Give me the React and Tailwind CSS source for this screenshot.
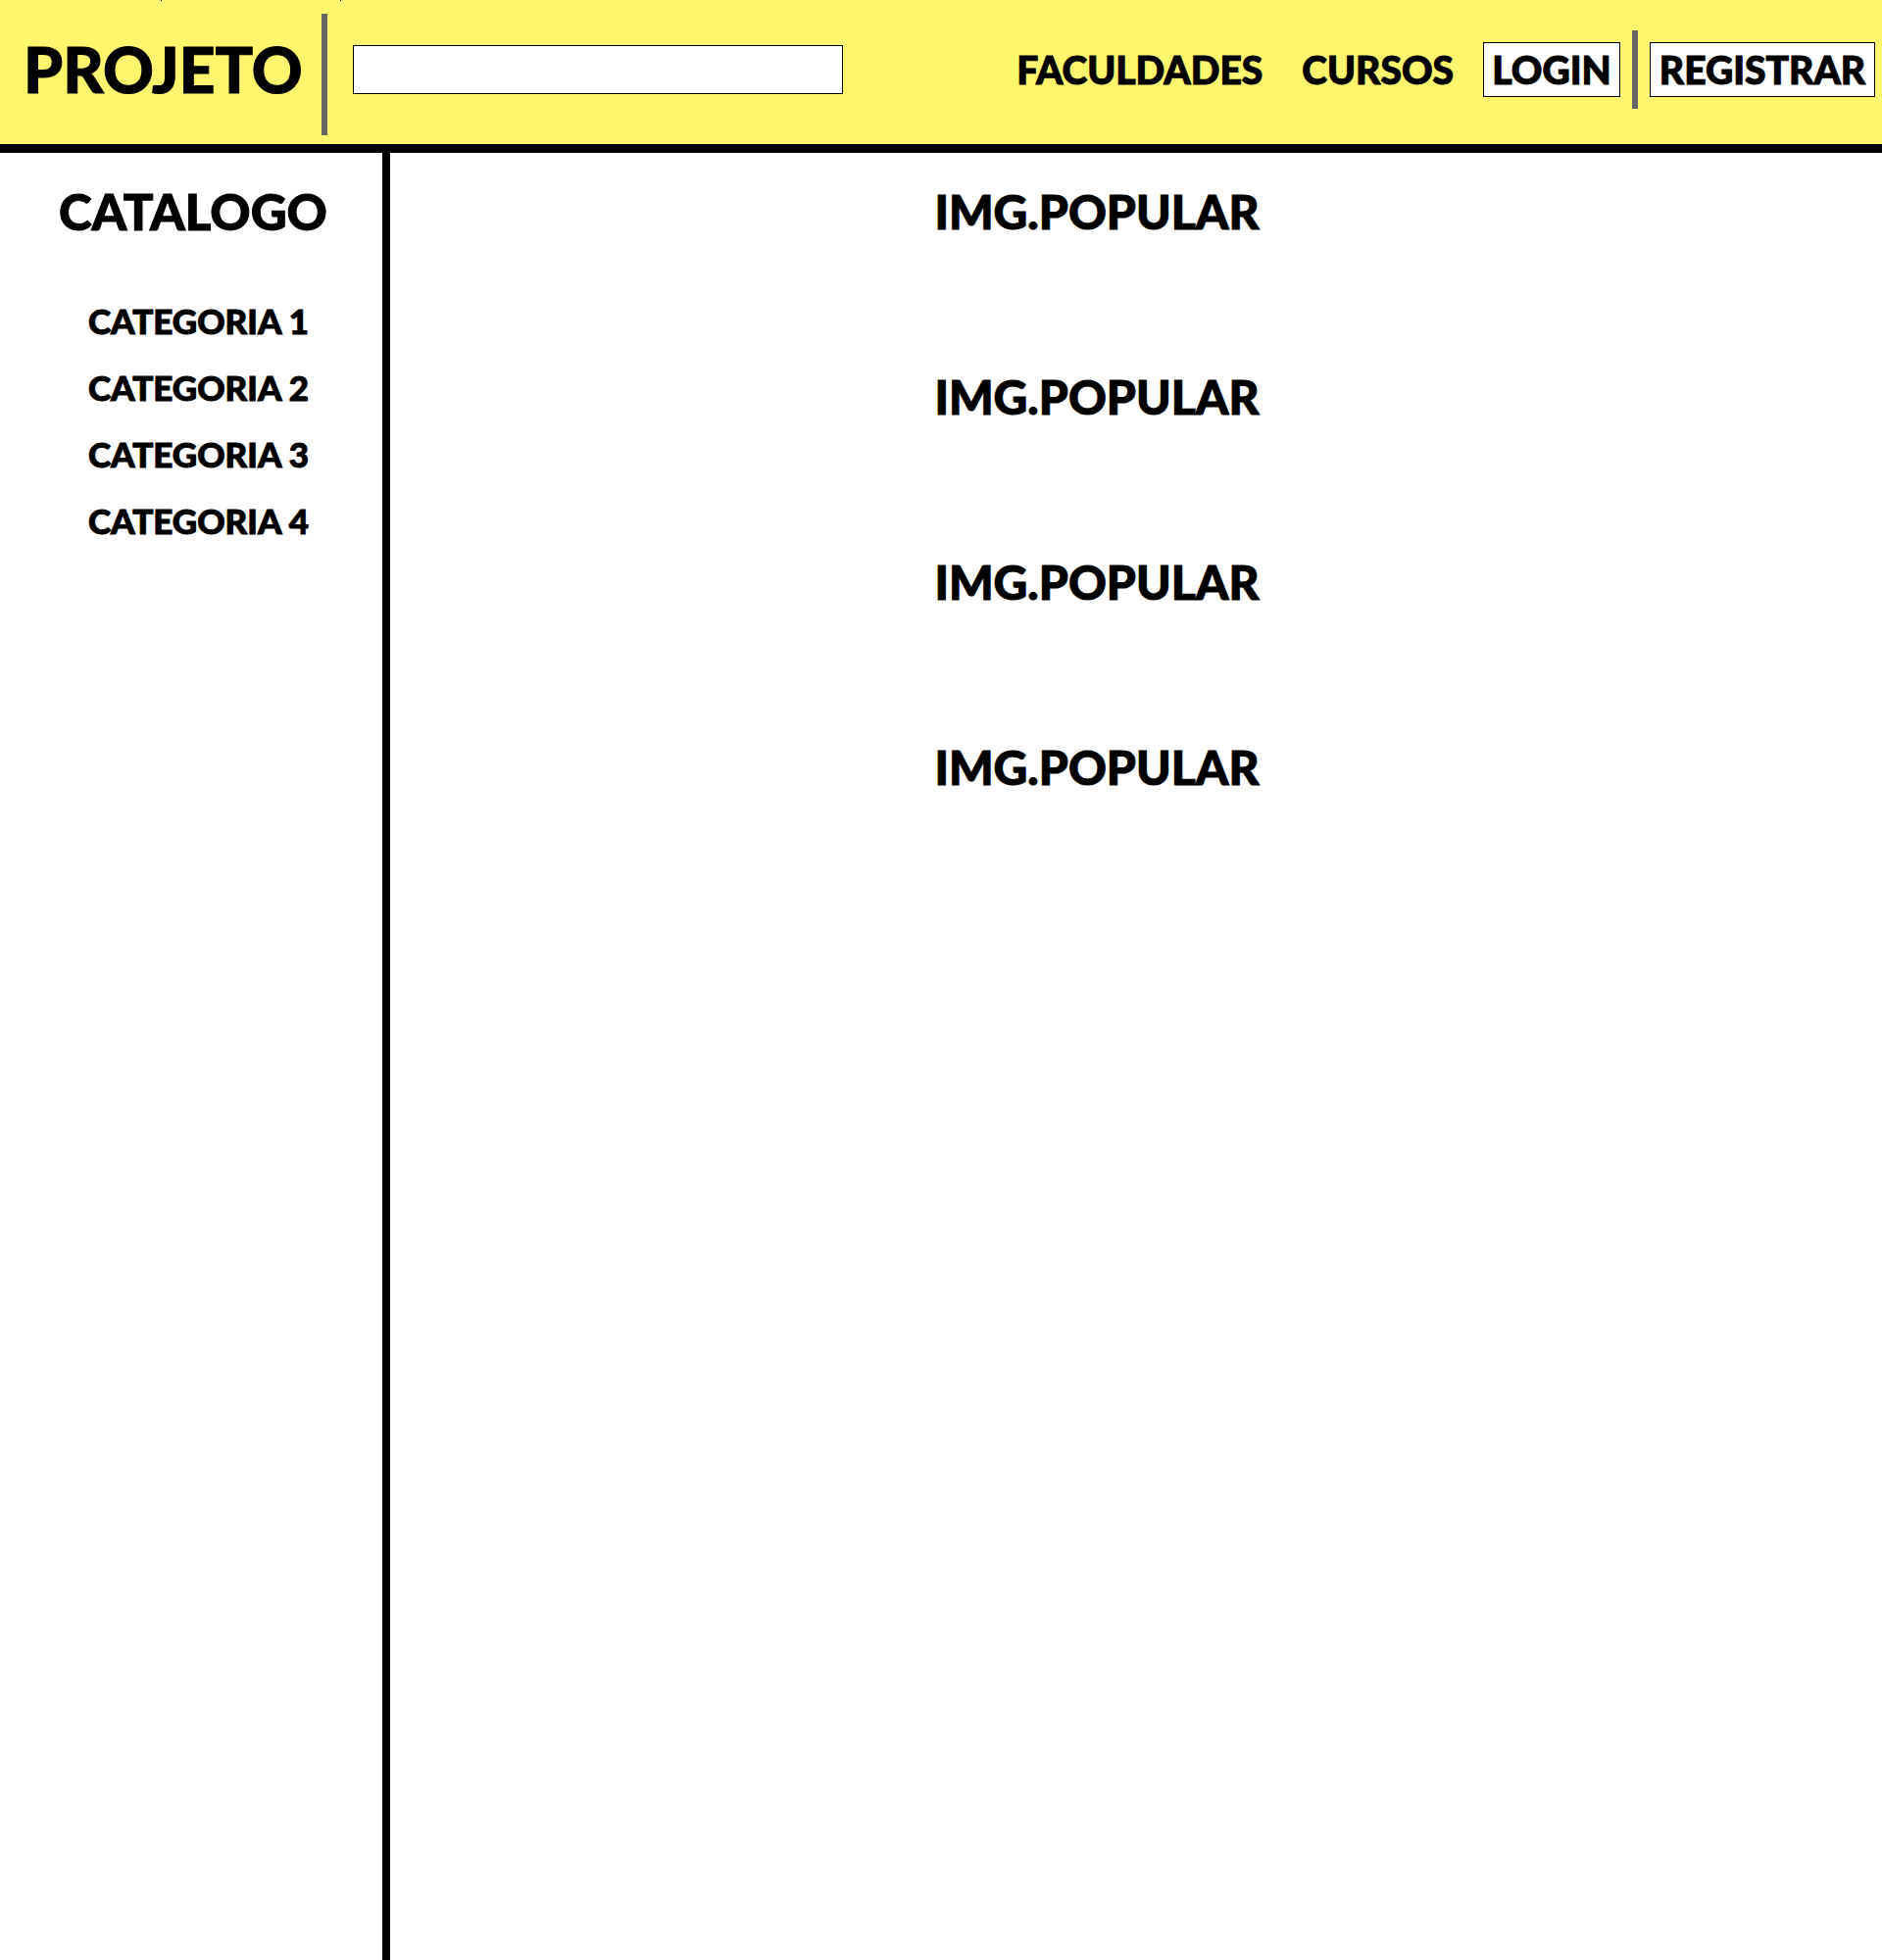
const categories = ["CATEGORIA 1", "CATEGORIA 2", "CATEGORIA 3", "CATEGORIA 4"];
const popular = [1, 2, 3, 4];

export default function App() {
  return (
    <div className="flex min-h-screen flex-col bg-white font-['Lato',sans-serif] font-black text-black [-webkit-text-stroke:1px_black]">
      <header className="relative flex h-[156px] items-start border-b-9 border-black bg-[#fff66e]">
        <span aria-hidden="true" className="absolute top-0 left-41 h-px w-px bg-black" />
        <span aria-hidden="true" className="absolute top-0 left-[347px] h-px w-px bg-black" />
        <a href="#inicio" className="mt-[31px] ml-6 w-[304px] text-[64px] leading-[80px]">PROJETO</a>
        <div className="mt-3.5 h-31 w-1.5 shrink-0 bg-[#666]" />
        <input
          type="search"
          aria-label="Pesquisar"
          className="mt-[46px] ml-[26px] h-[50px] w-[500px] min-w-0 border border-black bg-white px-3 text-2xl outline-none"
        />
        <nav className="mt-[31px] mr-[7px] ml-auto flex h-20 items-center text-[39px] leading-[54px]">
          <a href="#faculdades" className="mr-10">FACULDADES</a>
          <a href="#cursos" className="mr-[30px]">CURSOS</a>
          <button type="button" className="h-14 w-[140px] border border-black bg-white">LOGIN</button>
          <div className="mx-3 h-20 w-1.5 bg-[#666]" />
          <button type="button" className="h-14 w-[230px] border border-black bg-white">REGISTRAR</button>
        </nav>
      </header>
      <div className="flex flex-1">
        <aside className="w-[398px] shrink-0 border-r-8 border-black pt-[30px]">
          <h2 className="pl-[60px] text-[51px] leading-[60px]">CATALOGO</h2>
          <ul className="mt-[47px] pl-[90px] text-[35px] leading-[68px]">
            {categories.map((name) => (
              <li key={name}>
                <a href="#catalogo">{name}</a>
              </li>
            ))}
          </ul>
        </aside>
        <main className="flex flex-1 flex-col items-center gap-[129px] pt-[30px] pr-20 text-[48px] leading-[60px]">
          {popular.map((id) => (
            <h3 key={id}>IMG.POPULAR</h3>
          ))}
        </main>
      </div>
    </div>
  );
}
